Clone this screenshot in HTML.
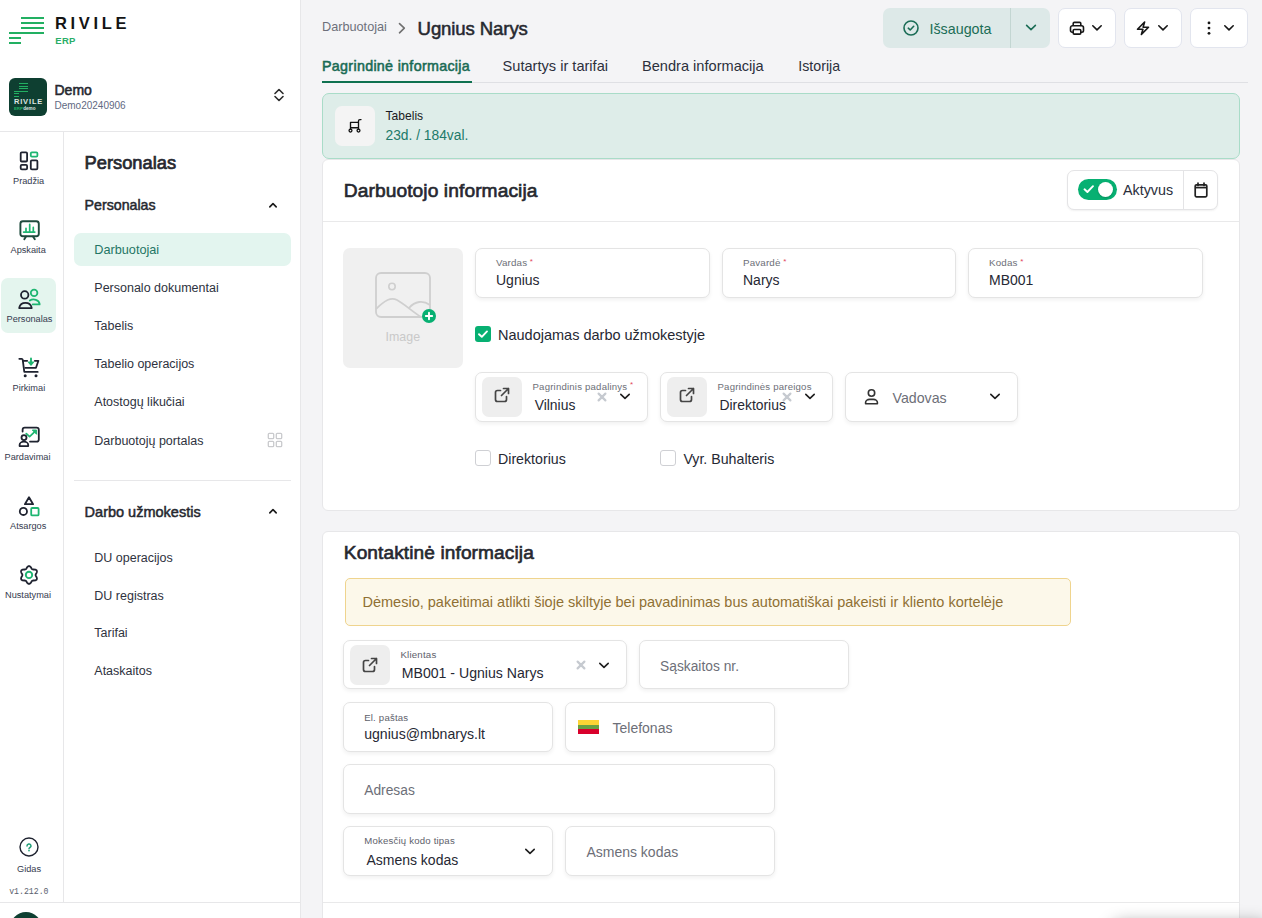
<!DOCTYPE html>
<html><head><meta charset="utf-8"><title>Rivile ERP</title>
<style>
html,body{margin:0;padding:0;}
body{width:1262px;height:918px;overflow:hidden;background:#f4f4f6;position:relative;font-family:"Liberation Sans",sans-serif;}
.t{position:absolute;white-space:nowrap;line-height:1;}
.r{position:absolute;}
</style></head><body>
<div class="r" style="left:0px;top:0px;width:301px;height:918px;background:#fff;"></div>
<div class="r" style="left:300px;top:0px;width:1px;height:918px;background:#e7e7e9;"></div>
<div class="r" style="left:0px;top:131px;width:300px;height:1px;background:#e7e7e9;"></div>
<div class="r" style="left:63px;top:132px;width:1px;height:770px;background:#e7e7e9;"></div>
<div class="r" style="left:0px;top:902px;width:300px;height:1px;background:#e7e7e9;"></div>
<div class="r" style="left:21px;top:17px;width:23px;height:2px;background:#22b062;"></div>
<div class="r" style="left:21px;top:22px;width:23px;height:2px;background:#22b062;"></div>
<div class="r" style="left:21px;top:27px;width:23px;height:2px;background:#22b062;"></div>
<div class="r" style="left:9px;top:32px;width:35px;height:2px;background:#22b062;"></div>
<div class="r" style="left:9px;top:37px;width:12px;height:2px;background:#22b062;"></div>
<div class="r" style="left:9px;top:42px;width:12px;height:2px;background:#22b062;"></div>
<div class="t" style="left:55.0px;top:15.13px;font-size:16.5px;font-weight:700;color:#141414;letter-spacing:3.65px;">RIVILE</div>
<div class="t" style="left:55.3px;top:35.76px;font-size:9.5px;font-weight:700;color:#2aae68;letter-spacing:0.25px;">ERP</div>
<div class="r" style="left:9px;top:78px;width:38px;height:38px;background:#0e3f31;border-radius:6px;"></div>
<div class="r" style="left:18.8px;top:83px;width:9.399999999999999px;height:1.2999999999999972px;background:#22b062;"></div>
<div class="r" style="left:18.8px;top:85.5px;width:9.399999999999999px;height:1.2999999999999972px;background:#22b062;"></div>
<div class="r" style="left:18.8px;top:88px;width:9.399999999999999px;height:1.2999999999999972px;background:#22b062;"></div>
<div class="r" style="left:14px;top:90.5px;width:14.2px;height:1.2999999999999972px;background:#22b062;"></div>
<div class="r" style="left:14px;top:93px;width:4.800000000000001px;height:1.2999999999999972px;background:#22b062;"></div>
<div class="r" style="left:14px;top:95.5px;width:4.800000000000001px;height:1.2999999999999972px;background:#22b062;"></div>
<div class="t" style="left:13.9px;top:97.85px;font-size:7.5px;font-weight:700;color:#dfe6e1;letter-spacing:0.85px;">RIVILE</div>
<div class="t" style="left:13.9px;top:107.08px;font-size:4.4px;font-weight:700;color:#22b062;">ERP</div>
<div class="t" style="left:23.2px;top:106.91px;font-size:4.6px;font-weight:700;color:#dfe6e1;">demo</div>
<div class="t" style="left:54.5px;top:82.75px;font-size:14px;font-weight:400;color:#26282f;-webkit-text-stroke:0.55px #26282f;">Demo</div>
<div class="t" style="left:54.5px;top:101.33px;font-size:10px;font-weight:400;color:#5f6982;">Demo20240906</div>
<svg class="r" style="left:272px;top:86px;" width="14" height="18" viewBox="0 0 14 18"><path d="M3 7.5 L7 3.5 L11 7.5 M3 10.5 L7 14.5 L11 10.5" fill="none" stroke="#2a2a2a" stroke-width="1.6" stroke-linecap="round" stroke-linejoin="round"/></svg>
<div class="r" style="left:1px;top:278px;width:55px;height:55px;background:#e4f5ee;border-radius:7px;"></div>
<svg class="r" style="left:18px;top:149px;" width="22" height="24" viewBox="0 0 22 24"><rect x="2.7" y="3.4" width="6.4" height="9.1" rx="1.1" fill="none" stroke="#1f2330" stroke-width="1.8"/>
<rect x="12.8" y="3.4" width="6.6" height="4.2" rx="1.1" fill="none" stroke="#1fb672" stroke-width="1.8"/>
<rect x="12.8" y="11.3" width="6.6" height="9.1" rx="1.1" fill="none" stroke="#1f2330" stroke-width="1.8"/>
<rect x="2.7" y="15.9" width="6.4" height="4.5" rx="1.1" fill="none" stroke="#1f2330" stroke-width="1.8"/></svg>
<div class="t" style="left:13.0px;top:177.41px;font-size:9.2px;font-weight:400;color:#343a4e;">Pradžia</div>
<svg class="r" style="left:18px;top:218px;" width="22" height="24" viewBox="0 0 22 24"><rect x="2.4" y="3.2" width="18.4" height="15" rx="2.5" fill="none" stroke="#1e4a3d" stroke-width="1.9"/>
<path d="M8 18.5 L6.3 21.3 M15 18.5 L16.8 21.3" stroke="#1e4a3d" stroke-width="1.9" stroke-linecap="round"/>
<path d="M5.6 14.1 H16.8 M8 14 V10.3 M11.7 14 V6.4 M15.3 14 V9.4" stroke="#1fb672" stroke-width="1.7" stroke-linecap="round"/></svg>
<div class="t" style="left:10.5px;top:246.41px;font-size:9.2px;font-weight:400;color:#343a4e;">Apskaita</div>
<svg class="r" style="left:17px;top:287px;" width="24" height="24" viewBox="0 0 24 24"><circle cx="7.7" cy="7.9" r="3.7" fill="none" stroke="#1f2330" stroke-width="1.8"/>
<path d="M2.3 21.2 V20.4 A6.3 5.8 0 0 1 14.6 20.4 V21.2 Z" fill="none" stroke="#1f2330" stroke-width="1.8" stroke-linejoin="round"/>
<circle cx="17.1" cy="5.9" r="3.3" fill="none" stroke="#1fb672" stroke-width="1.8"/>
<path d="M12.8 13.6 A6 5 0 0 1 22.6 16.8 V17.4 H15.8" fill="none" stroke="#1fb672" stroke-width="1.8" stroke-linecap="round" stroke-linejoin="round"/></svg>
<div class="t" style="left:6.5px;top:315.41px;font-size:9.2px;font-weight:400;color:#343a4e;">Personalas</div>
<svg class="r" style="left:17px;top:355px;" width="24" height="24" viewBox="0 0 24 24"><path d="M2.3 3.8 H4.6 A1.1 1.1 0 0 1 5.7 4.7 L7.3 16.9 H20.7" fill="none" stroke="#1f2330" stroke-width="1.8" stroke-linecap="round" stroke-linejoin="round"/>
<path d="M6.6 5.8 H10.2 M17.8 5.8 H21.4 L19 12.8 H8.3" fill="none" stroke="#1f2330" stroke-width="1.8" stroke-linecap="round" stroke-linejoin="round"/>
<circle cx="8.2" cy="20.7" r="1.5" fill="#1f2330"/><circle cx="19" cy="20.7" r="1.5" fill="#1f2330"/>
<path d="M14 3.4 V8.2" stroke="#1fb672" stroke-width="1.9" stroke-linecap="round"/><path d="M11.5 7.1 L14 10 L16.5 7.1 Z" fill="#1fb672" stroke="#1fb672" stroke-width="1.3" stroke-linejoin="round"/></svg>
<div class="t" style="left:12.5px;top:384.41px;font-size:9.2px;font-weight:400;color:#343a4e;">Pirkimai</div>
<svg class="r" style="left:17px;top:424px;" width="24" height="24" viewBox="0 0 24 24"><path d="M5.6 7.6 V5.8 A2.2 2.2 0 0 1 7.8 3.6 H19.6 A2.2 2.2 0 0 1 21.8 5.8 V15.4 A2.2 2.2 0 0 1 19.6 17.6 H13" fill="none" stroke="#1f2330" stroke-width="1.8" stroke-linecap="round"/>
<circle cx="7" cy="13.6" r="2.5" fill="none" stroke="#1f2330" stroke-width="1.8"/>
<path d="M2.6 22.1 V21 A4.2 3.2 0 0 1 11.2 21 V22.1 Z" fill="none" stroke="#1f2330" stroke-width="1.8" stroke-linejoin="round"/>
<path d="M9.3 9.6 L12.6 12.6 L18.4 7.2" fill="none" stroke="#1fb672" stroke-width="1.8" stroke-linecap="round" stroke-linejoin="round"/><path d="M15.3 6 H19.6 V10.3 Z" fill="#1fb672" stroke="#1fb672" stroke-width="1" stroke-linejoin="round"/></svg>
<div class="t" style="left:4.5px;top:453.41px;font-size:9.2px;font-weight:400;color:#343a4e;">Pardavimai</div>
<svg class="r" style="left:17px;top:494px;" width="24" height="24" viewBox="0 0 24 24"><path d="M12 3.3 L16.1 10.2 H7.9 Z" fill="none" stroke="#1f2330" stroke-width="1.8" stroke-linejoin="round"/>
<circle cx="6.4" cy="17.4" r="3.6" fill="none" stroke="#1f2330" stroke-width="1.8"/>
<rect x="14.2" y="14" width="7.4" height="7.4" rx="1" fill="none" stroke="#1fb672" stroke-width="1.8"/></svg>
<div class="t" style="left:10.0px;top:522.41px;font-size:9.2px;font-weight:400;color:#343a4e;">Atsargos</div>
<svg class="r" style="left:17px;top:563px;" width="24" height="24" viewBox="0 0 24 24"><path d="M18.60 12.00 L18.65 11.65 L18.78 11.29 L18.99 10.89 L19.23 10.46 L19.49 9.99 L19.71 9.50 L19.87 8.98 L19.93 8.47 L19.88 7.99 L19.71 7.55 L19.42 7.18 L19.02 6.90 L18.55 6.70 L18.02 6.58 L17.48 6.52 L16.95 6.50 L16.45 6.50 L16.01 6.48 L15.63 6.42 L15.30 6.28 L15.02 6.07 L14.77 5.77 L14.54 5.40 L14.29 4.97 L14.01 4.51 L13.69 4.07 L13.32 3.68 L12.91 3.37 L12.46 3.17 L12.00 3.10 L11.54 3.17 L11.09 3.37 L10.68 3.68 L10.31 4.07 L9.99 4.51 L9.71 4.97 L9.46 5.40 L9.23 5.77 L8.98 6.07 L8.70 6.28 L8.37 6.42 L7.99 6.48 L7.55 6.50 L7.05 6.50 L6.52 6.52 L5.98 6.58 L5.45 6.70 L4.98 6.90 L4.58 7.18 L4.29 7.55 L4.12 7.99 L4.07 8.47 L4.13 8.98 L4.29 9.50 L4.51 9.99 L4.77 10.46 L5.01 10.89 L5.22 11.29 L5.35 11.65 L5.40 12.00 L5.35 12.35 L5.22 12.71 L5.01 13.11 L4.77 13.54 L4.51 14.01 L4.29 14.50 L4.13 15.02 L4.07 15.53 L4.12 16.01 L4.29 16.45 L4.58 16.82 L4.98 17.10 L5.45 17.30 L5.98 17.42 L6.52 17.48 L7.05 17.50 L7.55 17.50 L7.99 17.52 L8.37 17.58 L8.70 17.72 L8.98 17.93 L9.23 18.23 L9.46 18.60 L9.71 19.03 L9.99 19.49 L10.31 19.93 L10.68 20.32 L11.09 20.63 L11.54 20.83 L12.00 20.90 L12.46 20.83 L12.91 20.63 L13.32 20.32 L13.69 19.93 L14.01 19.49 L14.29 19.03 L14.54 18.60 L14.77 18.23 L15.02 17.93 L15.30 17.72 L15.63 17.58 L16.01 17.52 L16.45 17.50 L16.95 17.50 L17.48 17.48 L18.02 17.42 L18.55 17.30 L19.02 17.10 L19.42 16.82 L19.71 16.45 L19.88 16.01 L19.93 15.53 L19.87 15.02 L19.71 14.50 L19.49 14.01 L19.23 13.54 L18.99 13.11 L18.78 12.71 L18.65 12.35 Z" fill="none" stroke="#1f2330" stroke-width="1.8" stroke-linejoin="round"/>
<circle cx="12" cy="11.9" r="3.2" fill="none" stroke="#1fb672" stroke-width="1.9"/></svg>
<div class="t" style="left:5.0px;top:591.41px;font-size:9.2px;font-weight:400;color:#343a4e;">Nustatymai</div>
<svg class="r" style="left:19px;top:837px;" width="20" height="20" viewBox="0 0 20 20"><circle cx="10" cy="10" r="9" fill="none" stroke="#1f2330" stroke-width="1.4"/>
<path d="M8 8.9 A2 1.9 0 1 1 11 10.5 C10.3 10.9 10 11.2 10 11.8" fill="none" stroke="#1f9e76" stroke-width="1.5" stroke-linecap="round"/><circle cx="10" cy="13.6" r="0.85" fill="#1f9e76"/></svg>
<div class="t" style="left:17.0px;top:865.21px;font-size:9.2px;font-weight:400;color:#343a4e;">Gidas</div>
<div class="t" style="left:9.2px;top:888.06px;font-size:8.2px;font-weight:400;color:#5a5f6e;font-family:'Liberation Mono',monospace;">v1.212.0</div>
<div class="r" style="left:10px;top:912px;width:32px;height:32px;background:#0e3f31;border-radius:50%;"></div>
<div class="t" style="left:84.6px;top:153.51px;font-size:18.3px;font-weight:400;color:#26282f;-webkit-text-stroke:0.7px #26282f;">Personalas</div>
<div class="t" style="left:84.6px;top:198.08px;font-size:14.2px;font-weight:400;color:#26282f;-webkit-text-stroke:0.5px #26282f;">Personalas</div>
<svg class="r" style="left:265px;top:200px;" width="16" height="12" viewBox="0 0 16 12"><path d="M4.8 6.9 L8 3.6 L11.2 6.9" fill="none" stroke="#1a1a1a" stroke-width="1.6" stroke-linecap="round" stroke-linejoin="round"/></svg>
<div class="r" style="left:74px;top:233px;width:217px;height:33px;background:#e3f5ef;border-radius:7px;"></div>
<div class="t" style="left:94.3px;top:244.05px;font-size:12.7px;font-weight:400;color:#237565;">Darbuotojai</div>
<div class="t" style="left:94.3px;top:281.82px;font-size:12.5px;font-weight:400;color:#2e3240;">Personalo dokumentai</div>
<div class="t" style="left:94.3px;top:319.92px;font-size:12.5px;font-weight:400;color:#2e3240;">Tabelis</div>
<div class="t" style="left:94.3px;top:357.92px;font-size:12.5px;font-weight:400;color:#2e3240;">Tabelio operacijos</div>
<div class="t" style="left:94.3px;top:396.42px;font-size:12.5px;font-weight:400;color:#2e3240;">Atostogų likučiai</div>
<div class="t" style="left:94.3px;top:435.02px;font-size:12.5px;font-weight:400;color:#2e3240;">Darbuotojų portalas</div>
<svg class="r" style="left:267px;top:432px;" width="16" height="16" viewBox="0 0 16 16"><rect x="1.3" y="1.3" width="5.4" height="5.4" rx="1" fill="none" stroke="#c9cacd" stroke-width="1.3"/><rect x="9.3" y="1.3" width="5.4" height="5.4" rx="1" fill="none" stroke="#c9cacd" stroke-width="1.3"/><rect x="1.3" y="9.3" width="5.4" height="5.4" rx="1" fill="none" stroke="#c9cacd" stroke-width="1.3"/><rect x="9.3" y="9.3" width="5.4" height="5.4" rx="1" fill="none" stroke="#c9cacd" stroke-width="1.3"/></svg>
<div class="r" style="left:74px;top:480px;width:217px;height:1px;background:#e7e7e9;"></div>
<div class="t" style="left:84.6px;top:504.83px;font-size:14.5px;font-weight:400;color:#26282f;-webkit-text-stroke:0.5px #26282f;">Darbo užmokestis</div>
<svg class="r" style="left:265px;top:506px;" width="16" height="12" viewBox="0 0 16 12"><path d="M4.8 6.9 L8 3.6 L11.2 6.9" fill="none" stroke="#1a1a1a" stroke-width="1.6" stroke-linecap="round" stroke-linejoin="round"/></svg>
<div class="t" style="left:94.3px;top:552.02px;font-size:12.5px;font-weight:400;color:#2e3240;">DU operacijos</div>
<div class="t" style="left:94.3px;top:589.72px;font-size:12.5px;font-weight:400;color:#2e3240;">DU registras</div>
<div class="t" style="left:94.3px;top:627.22px;font-size:12.5px;font-weight:400;color:#2e3240;">Tarifai</div>
<div class="t" style="left:94.3px;top:665.42px;font-size:12.5px;font-weight:400;color:#2e3240;">Ataskaitos</div>
<div class="t" style="left:322.0px;top:21.35px;font-size:12.7px;font-weight:400;color:#6d707a;">Darbuotojai</div>
<svg class="r" style="left:396px;top:21px;" width="12" height="14" viewBox="0 0 12 14"><path d="M3.5 2.6 L8.3 7.2 L3.5 11.8" fill="none" stroke="#707070" stroke-width="1.6" stroke-linecap="round" stroke-linejoin="round"/></svg>
<div class="t" style="left:417.6px;top:19.86px;font-size:18.6px;font-weight:400;color:#26282f;letter-spacing:-0.12px;-webkit-text-stroke:0.52px #26282f;">Ugnius Narys</div>
<div class="r" style="left:883px;top:8px;width:167px;height:40px;background:#dde9e8;border-radius:7px;"></div>
<div class="r" style="left:1010px;top:8px;width:1px;height:40px;background:#c3d6d2;"></div>
<svg class="r" style="left:902px;top:19px;" width="18" height="18" viewBox="0 0 18 18"><circle cx="9" cy="9" r="7" fill="none" stroke="#1b6d56" stroke-width="1.6"/><path d="M6.3 9.2 L8.2 11 L11.7 7.3" fill="none" stroke="#1b6d56" stroke-width="1.6" stroke-linecap="round" stroke-linejoin="round"/></svg>
<div class="t" style="left:929.5px;top:21.90px;font-size:14.3px;font-weight:400;color:#1b6d56;">Išsaugota</div>
<svg class="r" style="left:1023px;top:21px;" width="16" height="14" viewBox="0 0 16 14"><path d="M3.6 4.4 L8 8.6 L12.4 4.4" fill="none" stroke="#1b6d56" stroke-width="1.6" stroke-linecap="round" stroke-linejoin="round"/></svg>
<div class="r" style="left:1058px;top:8px;width:58px;height:40px;background:#fff;border:1px solid #e2e5ee;box-sizing:border-box;border-radius:7px;"></div>
<svg class="r" style="left:1089px;top:21px;" width="16" height="14" viewBox="0 0 16 14"><path d="M3.8 4.8 L8 8.9 L12.2 4.8" fill="none" stroke="#161616" stroke-width="1.6" stroke-linecap="round" stroke-linejoin="round"/></svg>
<div class="r" style="left:1124px;top:8px;width:58px;height:40px;background:#fff;border:1px solid #e2e5ee;box-sizing:border-box;border-radius:7px;"></div>
<svg class="r" style="left:1155px;top:21px;" width="16" height="14" viewBox="0 0 16 14"><path d="M3.8 4.8 L8 8.9 L12.2 4.8" fill="none" stroke="#161616" stroke-width="1.6" stroke-linecap="round" stroke-linejoin="round"/></svg>
<div class="r" style="left:1190px;top:8px;width:58px;height:40px;background:#fff;border:1px solid #e2e5ee;box-sizing:border-box;border-radius:7px;"></div>
<svg class="r" style="left:1221px;top:21px;" width="16" height="14" viewBox="0 0 16 14"><path d="M3.8 4.8 L8 8.9 L12.2 4.8" fill="none" stroke="#161616" stroke-width="1.6" stroke-linecap="round" stroke-linejoin="round"/></svg>
<svg class="r" style="left:1067px;top:19px;" width="20" height="20" viewBox="0 0 20 20"><path d="M6.2 6.8 V4.6 A1.2 1.2 0 0 1 7.4 3.4 H12.6 A1.2 1.2 0 0 1 13.8 4.6 V6.8" fill="none" stroke="#161616" stroke-width="1.6"/><path d="M6.2 13.3 H5.2 A1.7 1.7 0 0 1 3.5 11.6 V8.8 A2 2 0 0 1 5.5 6.8 H14.5 A2 2 0 0 1 16.5 8.8 V11.6 A1.7 1.7 0 0 1 14.8 13.3 H13.8" fill="none" stroke="#161616" stroke-width="1.6" stroke-linejoin="round"/><rect x="6.2" y="10.5" width="7.6" height="4.6" rx="1.1" fill="none" stroke="#161616" stroke-width="1.6"/></svg>
<svg class="r" style="left:1133px;top:19px;" width="20" height="20" viewBox="0 0 20 20"><path d="M11.6 3 L4.5 10.2 H9.9 L8.4 15.4 L15.5 8.2 H10.1 Z" fill="none" stroke="#161616" stroke-width="1.6" stroke-linejoin="round"/></svg>
<svg class="r" style="left:1199px;top:19px;" width="20" height="20" viewBox="0 0 20 20"><circle cx="10" cy="3.9" r="1.4" fill="#161616"/><circle cx="10" cy="9.1" r="1.4" fill="#161616"/><circle cx="10" cy="14.3" r="1.4" fill="#161616"/></svg>
<div class="r" style="left:322px;top:82px;width:926px;height:1px;background:#dfe0e4;"></div>
<div class="t" style="left:322.0px;top:59.40px;font-size:14.3px;font-weight:400;color:#1a6b55;letter-spacing:0.3px;-webkit-text-stroke:0.55px #1a6b55;">Pagrindinė informacija</div>
<div class="r" style="left:322px;top:81px;width:150px;height:2px;background:#0f7150;"></div>
<div class="t" style="left:502.6px;top:59.14px;font-size:14.6px;font-weight:400;color:#2c303c;">Sutartys ir tarifai</div>
<div class="t" style="left:642.0px;top:59.14px;font-size:14.6px;font-weight:400;color:#2c303c;">Bendra informacija</div>
<div class="t" style="left:798.3px;top:59.48px;font-size:14.2px;font-weight:400;color:#2c303c;">Istorija</div>
<div class="r" style="left:322px;top:93px;width:918px;height:66px;background:#deede9;border:1px solid #a9dcc8;box-sizing:border-box;border-radius:7px;"></div>
<div class="r" style="left:335px;top:106px;width:40px;height:40px;background:#f4f4f4;border-radius:7px;"></div>
<svg class="r" style="left:345px;top:116px;" width="20" height="20" viewBox="0 0 20 20"><path d="M5.5 13 V6.4 H13.5 M5.5 11.7 H13.5 M13.5 13 V5 A1.4 1.4 0 0 1 14.9 3.6 H16" fill="none" stroke="#111" stroke-width="1.35" stroke-linecap="round" stroke-linejoin="round"/><circle cx="5.5" cy="14.6" r="1.45" fill="none" stroke="#111" stroke-width="1.3"/><circle cx="13.5" cy="14.6" r="1.45" fill="none" stroke="#111" stroke-width="1.3"/></svg>
<div class="t" style="left:385.5px;top:109.96px;font-size:12.1px;font-weight:400;color:#1a1a22;">Tabelis</div>
<div class="t" style="left:385.5px;top:129.12px;font-size:13.8px;font-weight:400;color:#217a69;">23d. / 184val.</div>
<div class="r" style="left:322px;top:159px;width:918px;height:352px;background:#fff;border:1px solid #e7e7e9;box-sizing:border-box;border-radius:6px;"></div>
<div class="r" style="left:323px;top:221px;width:916px;height:1px;background:#e9e9ea;"></div>
<div class="t" style="left:343.8px;top:181.35px;font-size:19.2px;font-weight:400;color:#26282f;letter-spacing:0.08px;-webkit-text-stroke:0.65px #26282f;">Darbuotojo informacija</div>
<div class="r" style="left:1067px;top:170px;width:151px;height:40px;background:#fff;border:1px solid #e4e4e6;box-sizing:border-box;border-radius:7px;box-shadow:0 1px 2px rgba(0,0,0,0.06);"></div>
<div class="r" style="left:1183px;top:171px;width:1px;height:38px;background:#e4e4e6;"></div>
<div class="r" style="left:1078px;top:179px;width:39px;height:21px;background:#07b072;border-radius:11px;"></div>
<div class="r" style="left:1098px;top:182px;width:15px;height:15px;background:#fff;border-radius:50%;box-shadow:0 1px 2px rgba(0,0,0,0.2);"></div>
<svg class="r" style="left:1082px;top:182px;" width="14" height="14" viewBox="0 0 14 14"><path d="M2.5 7.3 L5.4 10 L11 4.2" fill="none" stroke="#fff" stroke-width="1.9" stroke-linecap="round" stroke-linejoin="round"/></svg>
<div class="t" style="left:1123.0px;top:183.00px;font-size:14.3px;font-weight:400;color:#2a2e3b;">Aktyvus</div>
<svg class="r" style="left:1193px;top:181px;" width="16" height="18" viewBox="0 0 16 18"><rect x="2.2" y="3.8" width="11.6" height="12" rx="1.3" fill="none" stroke="#222" stroke-width="1.7"/><path d="M2.2 6.6 H13.8" stroke="#222" stroke-width="1.7"/><path d="M5 2 V4.5 M11 2 V4.5" stroke="#222" stroke-width="1.7" stroke-linecap="round"/></svg>
<div class="r" style="left:343px;top:248px;width:120px;height:120px;background:#f0f0f0;border-radius:7px;"></div>
<svg class="r" style="left:373px;top:270px;" width="60" height="50" viewBox="0 0 60 50"><rect x="3" y="3" width="54" height="44" rx="5" fill="none" stroke="#cfcfcf" stroke-width="1.8"/><circle cx="19" cy="16.5" r="3.2" fill="none" stroke="#cfcfcf" stroke-width="1.6"/><path d="M3 39 C12 30 18 27 24 30 C30 33 40 42 48 47 M36 38 C42 31 50 30 57 35" fill="none" stroke="#cfcfcf" stroke-width="1.8"/></svg>
<div class="r" style="left:422px;top:309px;width:14px;height:14px;background:#07b072;border-radius:50%;"></div>
<svg class="r" style="left:422px;top:309px;" width="14" height="14" viewBox="0 0 14 14"><path d="M7 3.8 V10.2 M3.8 7 H10.2" stroke="#fff" stroke-width="1.9" stroke-linecap="round"/></svg>
<div class="t" style="left:385.6px;top:330.50px;font-size:12.4px;font-weight:400;color:#c9c9c9;">Image</div>
<div class="r" style="left:475px;top:248px;width:235px;height:50px;background:#fff;border:1px solid #e4e4e4;box-sizing:border-box;border-radius:7px;box-shadow:0 2px 4px rgba(0,0,0,0.06);"></div>
<div class="t" style="left:496.0px;top:257.80px;font-size:9.8px;font-weight:400;color:#6d6f78;letter-spacing:0.15px;">Vardas<span style="color:#e2475d;font-size:8px;margin-left:2.6px;position:relative;top:-2.2px;">*</span></div>
<div class="t" style="left:496.0px;top:273.15px;font-size:14px;font-weight:400;color:#262833;">Ugnius</div>
<div class="r" style="left:722px;top:248px;width:234px;height:50px;background:#fff;border:1px solid #e4e4e4;box-sizing:border-box;border-radius:7px;box-shadow:0 2px 4px rgba(0,0,0,0.06);"></div>
<div class="t" style="left:743.0px;top:257.80px;font-size:9.8px;font-weight:400;color:#6d6f78;letter-spacing:0.15px;">Pavardė<span style="color:#e2475d;font-size:8px;margin-left:2.6px;position:relative;top:-2.2px;">*</span></div>
<div class="t" style="left:743.0px;top:273.15px;font-size:14px;font-weight:400;color:#262833;">Narys</div>
<div class="r" style="left:968px;top:248px;width:235px;height:50px;background:#fff;border:1px solid #e4e4e4;box-sizing:border-box;border-radius:7px;box-shadow:0 2px 4px rgba(0,0,0,0.06);"></div>
<div class="t" style="left:989.0px;top:257.80px;font-size:9.8px;font-weight:400;color:#6d6f78;letter-spacing:0.15px;">Kodas<span style="color:#e2475d;font-size:8px;margin-left:2.6px;position:relative;top:-2.2px;">*</span></div>
<div class="t" style="left:989.0px;top:273.15px;font-size:14px;font-weight:400;color:#262833;">MB001</div>
<div class="r" style="left:475px;top:326px;width:16px;height:16px;background:#07b072;border-radius:3px;"></div>
<svg class="r" style="left:475px;top:326px;" width="16" height="16" viewBox="0 0 16 16"><path d="M4 8.2 L6.8 10.8 L12 5.4" fill="none" stroke="#fff" stroke-width="1.9" stroke-linecap="round" stroke-linejoin="round"/></svg>
<div class="t" style="left:498.0px;top:327.93px;font-size:14.5px;font-weight:400;color:#262833;">Naudojamas darbo užmokestyje</div>
<div class="r" style="left:475px;top:372px;width:173px;height:50px;background:#fff;border:1px solid #e4e4e4;box-sizing:border-box;border-radius:7px;box-shadow:0 2px 4px rgba(0,0,0,0.06);"></div>
<div class="r" style="left:482px;top:377px;width:40px;height:40px;background:#eeeeee;border-radius:7px;"></div>
<svg class="r" style="left:492px;top:385px;" width="20" height="20" viewBox="0 0 20 20"><path d="M11.5 3.5 H16.5 V8.5 M16.5 3.5 L9.5 10.5 M14.5 11.5 V14.5 A2 2 0 0 1 12.5 16.5 H5.5 A2 2 0 0 1 3.5 14.5 V7.5 A2 2 0 0 1 5.5 5.5 H8.5" fill="none" stroke="#454545" stroke-width="1.7" stroke-linecap="round" stroke-linejoin="round"/></svg>
<div class="t" style="left:532.5px;top:381.67px;font-size:9.6px;font-weight:400;color:#6d6f78;letter-spacing:0.2px;">Pagrindinis padalinys<span style="color:#e2475d;font-size:8px;margin-left:2.6px;position:relative;top:-2.2px;">*</span></div>
<div class="t" style="left:534.7px;top:398.83px;font-size:13.9px;font-weight:400;color:#262833;">Vilnius</div>
<svg class="r" style="left:597px;top:392px;" width="10" height="10" viewBox="0 0 10 10"><path d="M1.6 1.6 L8.4 8.4 M8.4 1.6 L1.6 8.4" stroke="#c6cad0" stroke-width="2.2" stroke-linecap="round"/></svg>
<svg class="r" style="left:618px;top:391px;" width="14" height="10" viewBox="0 0 14 10"><path d="M2.8 3.4 L7 7.4 L11.2 3.4" fill="none" stroke="#1e1e1e" stroke-width="1.6" stroke-linecap="round" stroke-linejoin="round"/></svg>
<div class="r" style="left:660px;top:372px;width:173px;height:50px;background:#fff;border:1px solid #e4e4e4;box-sizing:border-box;border-radius:7px;box-shadow:0 2px 4px rgba(0,0,0,0.06);"></div>
<div class="r" style="left:667px;top:377px;width:40px;height:40px;background:#eeeeee;border-radius:7px;"></div>
<svg class="r" style="left:677px;top:385px;" width="20" height="20" viewBox="0 0 20 20"><path d="M11.5 3.5 H16.5 V8.5 M16.5 3.5 L9.5 10.5 M14.5 11.5 V14.5 A2 2 0 0 1 12.5 16.5 H5.5 A2 2 0 0 1 3.5 14.5 V7.5 A2 2 0 0 1 5.5 5.5 H8.5" fill="none" stroke="#454545" stroke-width="1.7" stroke-linecap="round" stroke-linejoin="round"/></svg>
<div class="t" style="left:717.5px;top:381.67px;font-size:9.6px;font-weight:400;color:#6d6f78;letter-spacing:0.2px;">Pagrindinės pareigos</div>
<div class="t" style="left:719.5px;top:398.83px;font-size:13.9px;font-weight:400;color:#262833;">Direktorius</div>
<svg class="r" style="left:782px;top:392px;" width="10" height="10" viewBox="0 0 10 10"><path d="M1.6 1.6 L8.4 8.4 M8.4 1.6 L1.6 8.4" stroke="#c6cad0" stroke-width="2.2" stroke-linecap="round"/></svg>
<svg class="r" style="left:803px;top:391px;" width="14" height="10" viewBox="0 0 14 10"><path d="M2.8 3.4 L7 7.4 L11.2 3.4" fill="none" stroke="#1e1e1e" stroke-width="1.6" stroke-linecap="round" stroke-linejoin="round"/></svg>
<div class="r" style="left:845px;top:372px;width:173px;height:50px;background:#fff;border:1px solid #e4e4e4;box-sizing:border-box;border-radius:7px;box-shadow:0 2px 4px rgba(0,0,0,0.06);"></div>
<svg class="r" style="left:862px;top:387px;" width="20" height="20" viewBox="0 0 20 20"><circle cx="9.5" cy="6" r="3.2" fill="none" stroke="#333" stroke-width="1.6"/><path d="M3.6 16.8 V15.6 A4 3.2 0 0 1 7.6 12.4 H11.4 A4 3.2 0 0 1 15.4 15.6 V16.8 Z" fill="none" stroke="#333" stroke-width="1.6" stroke-linejoin="round"/></svg>
<div class="t" style="left:892.5px;top:391.28px;font-size:14.2px;font-weight:400;color:#6d6f78;">Vadovas</div>
<svg class="r" style="left:988px;top:391px;" width="14" height="10" viewBox="0 0 14 10"><path d="M2.8 3.4 L7 7.4 L11.2 3.4" fill="none" stroke="#1e1e1e" stroke-width="1.6" stroke-linecap="round" stroke-linejoin="round"/></svg>
<div class="r" style="left:475px;top:450px;width:16px;height:16px;background:#fff;border:1px solid #cfd0d4;box-sizing:border-box;border-radius:3px;"></div>
<div class="t" style="left:498.0px;top:451.98px;font-size:14.2px;font-weight:400;color:#262833;">Direktorius</div>
<div class="r" style="left:660px;top:450px;width:16px;height:16px;background:#fff;border:1px solid #cfd0d4;box-sizing:border-box;border-radius:3px;"></div>
<div class="t" style="left:683.4px;top:451.98px;font-size:14.2px;font-weight:400;color:#262833;">Vyr. Buhalteris</div>
<div class="r" style="left:322px;top:531px;width:918px;height:429px;background:#fff;border:1px solid #e7e7e9;box-sizing:border-box;border-radius:6px;"></div>
<div class="r" style="left:323px;top:902px;width:916px;height:1px;background:#e9e9ea;"></div>
<div class="t" style="left:343.8px;top:543.13px;font-size:19.1px;font-weight:400;color:#26282f;letter-spacing:0.1px;-webkit-text-stroke:0.65px #26282f;">Kontaktinė informacija</div>
<div class="r" style="left:345px;top:578px;width:726px;height:48px;background:#fcf8ea;border:1px solid #efd48e;box-sizing:border-box;border-radius:5px;"></div>
<div class="t" style="left:362.5px;top:595.13px;font-size:14.5px;font-weight:400;color:#8f7033;">Dėmesio, pakeitimai atlikti šioje skiltyje bei pavadinimas bus automatiškai pakeisti ir kliento kortelėje</div>
<div class="r" style="left:343px;top:640px;width:284px;height:49px;background:#fff;border:1px solid #e4e4e4;box-sizing:border-box;border-radius:7px;box-shadow:0 2px 4px rgba(0,0,0,0.06);"></div>
<div class="r" style="left:350px;top:645px;width:40px;height:40px;background:#eeeeee;border-radius:7px;"></div>
<svg class="r" style="left:360px;top:655px;" width="20" height="20" viewBox="0 0 20 20"><path d="M11.5 3.5 H16.5 V8.5 M16.5 3.5 L9.5 10.5 M14.5 11.5 V14.5 A2 2 0 0 1 12.5 16.5 H5.5 A2 2 0 0 1 3.5 14.5 V7.5 A2 2 0 0 1 5.5 5.5 H8.5" fill="none" stroke="#454545" stroke-width="1.7" stroke-linecap="round" stroke-linejoin="round"/></svg>
<div class="t" style="left:400.4px;top:650.39px;font-size:9.7px;font-weight:400;color:#5e616b;letter-spacing:0.2px;">Klientas</div>
<div class="t" style="left:401.8px;top:666.06px;font-size:14.1px;font-weight:400;color:#262833;">MB001 - Ugnius Narys</div>
<svg class="r" style="left:576px;top:660px;" width="10" height="10" viewBox="0 0 10 10"><path d="M1.6 1.6 L8.4 8.4 M8.4 1.6 L1.6 8.4" stroke="#c6cad0" stroke-width="2.2" stroke-linecap="round"/></svg>
<svg class="r" style="left:597px;top:660px;" width="14" height="10" viewBox="0 0 14 10"><path d="M2.8 3.4 L7 7.4 L11.2 3.4" fill="none" stroke="#1e1e1e" stroke-width="1.6" stroke-linecap="round" stroke-linejoin="round"/></svg>
<div class="r" style="left:639px;top:640px;width:210px;height:49px;background:#fff;border:1px solid #e4e4e4;box-sizing:border-box;border-radius:7px;box-shadow:0 2px 4px rgba(0,0,0,0.06);"></div>
<div class="t" style="left:660.0px;top:660.12px;font-size:13.8px;font-weight:400;color:#6d6f78;">Sąskaitos nr.</div>
<div class="r" style="left:343px;top:702px;width:210px;height:50px;background:#fff;border:1px solid #e4e4e4;box-sizing:border-box;border-radius:7px;box-shadow:0 2px 4px rgba(0,0,0,0.06);"></div>
<div class="t" style="left:364.2px;top:713.07px;font-size:9.6px;font-weight:400;color:#5e616b;letter-spacing:0.2px;">El. paštas</div>
<div class="t" style="left:364.2px;top:726.56px;font-size:14.1px;font-weight:400;color:#262833;">ugnius@mbnarys.lt</div>
<div class="r" style="left:565px;top:702px;width:210px;height:50px;background:#fff;border:1px solid #e4e4e4;box-sizing:border-box;border-radius:7px;box-shadow:0 2px 4px rgba(0,0,0,0.06);"></div>
<div class="r" style="left:578px;top:720px;width:21px;height:4.5px;background:#fdd535;"></div>
<div class="r" style="left:578px;top:724.5px;width:21px;height:4.5px;background:#6aa044;"></div>
<div class="r" style="left:578px;top:729px;width:21px;height:4.5px;background:#d9002c;"></div>
<div class="t" style="left:612.5px;top:721.35px;font-size:14px;font-weight:400;color:#6d6f78;">Telefonas</div>
<div class="r" style="left:343px;top:764px;width:432px;height:50px;background:#fff;border:1px solid #e4e4e4;box-sizing:border-box;border-radius:7px;box-shadow:0 2px 4px rgba(0,0,0,0.06);"></div>
<div class="t" style="left:364.2px;top:784.12px;font-size:13.8px;font-weight:400;color:#6d6f78;">Adresas</div>
<div class="r" style="left:343px;top:826px;width:210px;height:50px;background:#fff;border:1px solid #e4e4e4;box-sizing:border-box;border-radius:7px;box-shadow:0 2px 4px rgba(0,0,0,0.06);"></div>
<div class="t" style="left:364.2px;top:836.37px;font-size:9.6px;font-weight:400;color:#5e616b;letter-spacing:0.2px;">Mokesčių kodo tipas</div>
<div class="t" style="left:366.4px;top:852.55px;font-size:14px;font-weight:400;color:#262833;">Asmens kodas</div>
<svg class="r" style="left:523px;top:846px;" width="14" height="10" viewBox="0 0 14 10"><path d="M2.8 3.4 L7 7.4 L11.2 3.4" fill="none" stroke="#1e1e1e" stroke-width="1.6" stroke-linecap="round" stroke-linejoin="round"/></svg>
<div class="r" style="left:565px;top:826px;width:210px;height:50px;background:#fff;border:1px solid #e4e4e4;box-sizing:border-box;border-radius:7px;box-shadow:0 2px 4px rgba(0,0,0,0.06);"></div>
<div class="t" style="left:586.4px;top:845.15px;font-size:14px;font-weight:400;color:#6d6f78;">Asmens kodas</div>
<div class="r" style="left:1110px;top:924px;width:160px;height:36px;background:#fff;box-shadow:0 -2px 16px rgba(0,0,0,0.34);border-radius:14px;"></div>
</body></html>
